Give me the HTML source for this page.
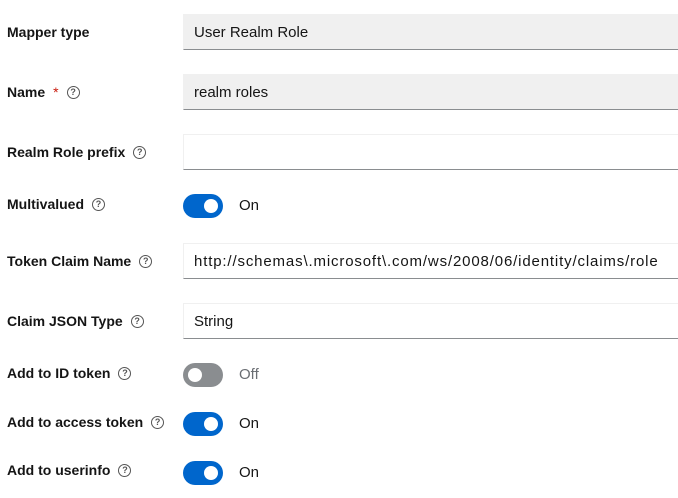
<!DOCTYPE html>
<html><head><style>
body{margin:0;width:678px;height:498px;background:#fff;font-family:"Liberation Sans",sans-serif;position:relative;overflow:hidden}
.l{position:absolute;left:7px;font-size:14px;font-weight:bold;color:#151515;line-height:16px}
.q{display:inline-block;width:11px;height:11px;border:1.4px solid #555;border-radius:50%;font-size:9px;line-height:11px;text-align:center;margin-left:8px;vertical-align:2px;font-weight:bold;color:#555}
.star{color:#c9190b;margin-left:8px;font-weight:normal}
.in{position:absolute;left:183px;width:500px;height:36px;border:1px solid #f0f0f0;border-bottom:1px solid #8a8d90;box-sizing:border-box;font-size:15px;color:#151515;padding-left:10px;line-height:36px}
.ro{background:#f0f0f0}
.t{position:absolute;left:183px;width:40px;height:24px;border-radius:12px;background:#0066cc}
.t::after{content:"";position:absolute;top:5px;left:21px;width:14px;height:14px;border-radius:50%;background:#fff}
.t.off{background:#8a8d90}
.t.off::after{left:5px}
.tl{position:absolute;left:239px;font-size:15px;color:#151515;line-height:18px}
</style></head><body>
<div class="l" style="top:24px">Mapper type</div>
<div class="in ro" style="top:14px">User Realm Role</div>
<div class="l" style="top:84px">Name<span class="star">*</span><span class="q">?</span></div>
<div class="in ro" style="top:74px">realm roles</div>
<div class="l" style="top:144px">Realm Role prefix<span class="q">?</span></div>
<div class="in" style="top:134px"></div>
<div class="l" style="top:196px">Multivalued<span class="q">?</span></div>
<div class="t" style="top:194px"></div><div class="tl" style="top:197px">On</div>
<div class="l" style="top:253px">Token Claim Name<span class="q">?</span></div>
<div class="in" style="top:243px;letter-spacing:0.85px">http://schemas\.microsoft\.com/ws/2008/06/identity/claims/role</div>
<div class="l" style="top:313px">Claim JSON Type<span class="q">?</span></div>
<div class="in" style="top:303px">String</div>
<div class="l" style="top:365px">Add to ID token<span class="q">?</span></div>
<div class="t off" style="top:363px"></div><div class="tl" style="top:366px;color:#6a6e73">Off</div>
<div class="l" style="top:414px">Add to access token<span class="q">?</span></div>
<div class="t" style="top:412px"></div><div class="tl" style="top:415px">On</div>
<div class="l" style="top:462px">Add to userinfo<span class="q">?</span></div>
<div class="t" style="top:461px"></div><div class="tl" style="top:464px">On</div>
</body></html>
